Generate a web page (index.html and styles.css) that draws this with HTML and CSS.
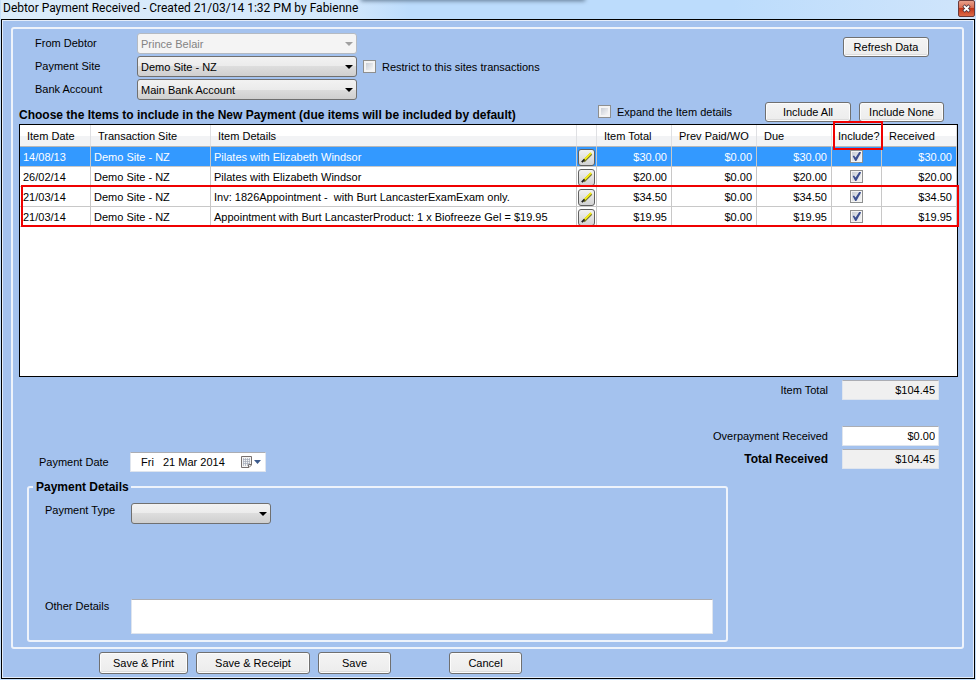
FILE: index.html
```html
<!DOCTYPE html>
<html lang="en">

<head>
  <meta charset="UTF-8">
  <title>Debtor Payment Received</title>
  <link rel="stylesheet" href="styles.css">
</head>

<body>
  <header class="titlebar">
    <h1>Debtor Payment Received - Created 21/03/14 1:32 PM by Fabienne</h1>
    <button class="close" type="button" aria-label="Close">
      <svg width="9" height="9" viewBox="0 0 9 9">
        <path d="M1.5 1.5L7.5 7.5M7.5 1.5L1.5 7.5" stroke="#4a3540" stroke-width="3.4" />
        <path d="M2 2L7 7M7 2L2 7" stroke="#fff" stroke-width="1.8" />
      </svg>
    </button>
  </header>

  <form class="window">
    <div class="panel">
      <div class="top">
        <div class="fields">
          <label for="debtor">From Debtor</label>
          <div class="select off"><select id="debtor" disabled><option>Prince Belair</option></select></div>
          <span></span>
          <label for="site">Payment Site</label>
          <div class="select"><select id="site"><option>Demo Site - NZ</option></select></div>
          <label class="check"><input type="checkbox"> Restrict to this sites transactions</label>
          <label for="bank">Bank Account</label>
          <div class="select"><select id="bank"><option>Main Bank Account</option></select></div>
        </div>
        <button class="btn refresh" type="button">Refresh Data</button>
      </div>

      <div class="bar">
        <h2>Choose the Items to include in the New Payment (due items will be included by default)</h2>
        <label class="check"><input type="checkbox"> Expand the Item details</label>
        <button class="btn all" type="button">Include All</button>
        <button class="btn none" type="button">Include None</button>
      </div>

      <div class="items">
        <table>
          <colgroup>
            <col class="c-date"><col class="c-site"><col><col class="c-edit"><col class="c-money"><col class="c-prev"><col class="c-money"><col class="c-inc"><col class="c-money">
          </colgroup>
          <thead>
            <tr>
              <th>Item Date</th>
              <th>Transaction Site</th>
              <th>Item Details</th>
              <th></th>
              <th>Item Total</th>
              <th>Prev Paid/WO</th>
              <th>Due</th>
              <th class="inc">Include?<span class="mark-head"></span></th>
              <th>Received</th>
            </tr>
          </thead>
          <tbody>
            <tr class="selected">
              <td>14/08/13</td>
              <td>Demo Site - NZ</td>
              <td>Pilates with Elizabeth Windsor</td>
              <td class="edit"><button type="button" aria-label="Edit"><svg width="16" height="16" viewBox="0 0 16 16"><use href="#pencil" /></svg></button></td>
              <td class="num">$30.00</td>
              <td class="num">$0.00</td>
              <td class="num">$30.00</td>
              <td class="tick"><input type="checkbox" aria-label="Include" checked></td>
              <td class="num">$30.00</td>
            </tr>
            <tr>
              <td>26/02/14</td>
              <td>Demo Site - NZ</td>
              <td>Pilates with Elizabeth Windsor</td>
              <td class="edit"><button type="button" aria-label="Edit"><svg width="16" height="16" viewBox="0 0 16 16"><use href="#pencil" /></svg></button></td>
              <td class="num">$20.00</td>
              <td class="num">$0.00</td>
              <td class="num">$20.00</td>
              <td class="tick"><input type="checkbox" aria-label="Include" checked></td>
              <td class="num">$20.00</td>
            </tr>
            <tr>
              <td>21/03/14</td>
              <td>Demo Site - NZ</td>
              <td>Inv: 1826Appointment -&nbsp; with Burt LancasterExamExam only.</td>
              <td class="edit"><button type="button" aria-label="Edit"><svg width="16" height="16" viewBox="0 0 16 16"><use href="#pencil" /></svg></button></td>
              <td class="num">$34.50</td>
              <td class="num">$0.00</td>
              <td class="num">$34.50</td>
              <td class="tick"><input type="checkbox" aria-label="Include" checked></td>
              <td class="num">$34.50</td>
            </tr>
            <tr>
              <td>21/03/14</td>
              <td>Demo Site - NZ</td>
              <td>Appointment with Burt LancasterProduct: 1 x Biofreeze Gel = $19.95</td>
              <td class="edit"><button type="button" aria-label="Edit"><svg width="16" height="16" viewBox="0 0 16 16"><use href="#pencil" /></svg></button></td>
              <td class="num">$19.95</td>
              <td class="num">$0.00</td>
              <td class="num">$19.95</td>
              <td class="tick"><input type="checkbox" aria-label="Include" checked></td>
              <td class="num">$19.95</td>
            </tr>
          </tbody>
        </table>
        <span class="mark-rows"></span>
      </div>

      <div class="totals">
        <label for="itemtotal">Item Total</label>
        <input id="itemtotal" type="text" value="$104.45" readonly>
        <label class="over" for="over">Overpayment Received</label>
        <input class="over" id="over" type="text" value="$0.00">
        <div class="date">
          <label for="date">Payment Date</label>
          <div class="datebox">
            <input id="date" type="text" value="Fri   21 Mar 2014">
            <button type="button" aria-label="Pick a date">
              <svg width="22" height="14" viewBox="0 0 22 14">
                <path d="M1.5 1.5H11.500V10L9 12.500H1.500Z" fill="#f4f4f4" stroke="#77706e" />
                <path d="M3 4.500H10M3 6.500H10M3 8.500H10M3.500 3V11M5.500 3V11M7.500 3V11M9.500 3V9" stroke="#a3abb8" stroke-width=".7" />
                <path d="M8.500 12.500V9.500H11.500" fill="none" stroke="#77706e" />
                <path d="M14 5H21L17.500 9Z" fill="#3c5a8c" />
              </svg>
            </button>
          </div>
        </div>
        <label class="total" for="total">Total Received</label>
        <input id="total" type="text" value="$104.45" readonly>
      </div>

      <fieldset class="details">
        <legend>Payment Details</legend>
        <div class="row type">
          <label for="type">Payment Type</label>
          <div class="select"><select id="type"><option></option></select></div>
        </div>
        <div class="row">
          <label for="other">Other Details</label>
          <textarea id="other"></textarea>
        </div>
      </fieldset>
    </div>

    <div class="actions">
      <button class="btn print" type="button">Save &amp; Print</button>
      <button class="btn receipt" type="button">Save &amp; Receipt</button>
      <button class="btn save" type="button">Save</button>
      <button class="btn cancel" type="button">Cancel</button>
    </div>
  </form>

  <svg class="defs" width="0" height="0">
    <symbol id="pencil" viewBox="0 0 16 16">
      <path d="M5 12L13 4" stroke="#77772a" stroke-width="3" />
      <path d="M5 11L13 3" stroke="#f6ee1c" stroke-width="2" />
      <path d="M3 13L6 10" stroke="#222" stroke-width="2" />
    </symbol>
  </svg>
</body>

</html>
```

FILE: styles.css
```css
* {
  box-sizing: border-box;
}

body {
  margin: 0;
  min-height: 100vh;
  padding: 0 1px 1px;
  display: flex;
  flex-direction: column;
  background-color: #c6e0fb;
  color: #000;
  font-family: "Liberation Sans", Arial, sans-serif;
  font-size: 11px;
  line-height: 14px;
}

input,
select,
textarea,
button {
  margin: 0;
  font: inherit;
  color: inherit;
}

/* title bar */
.titlebar {
  position: relative;
  overflow: hidden;
  display: flex;
  justify-content: space-between;
  height: 19px;
  background: linear-gradient(90deg, #dcecfa, #d4e8fb 35%, #bcdcfc 42%, #bcdcfc 75%, #d0e5fb);
}

/* blurred text of the window behind */
.titlebar::after {
  content: "";
  position: absolute;
  top: -4px;
  left: 37%;
  width: 23%;
  height: 5px;
  background-color: #607890;
  filter: blur(2px);
}

h1 {
  margin: 0;
  padding-left: 2px;
  font-family: Roboto, "Segoe UI", sans-serif;
  font-size: 12px;
  font-weight: 400;
  line-height: 16px;
}

.close {
  width: 17px;
  height: 17px;
  padding: 0;
  display: flex;
  align-items: center;
  justify-content: center;
  border: 1px solid #6b3a3a;
  border-radius: 2px;
  background: linear-gradient(#e8a08c, #d8674c 50%, #c2361a 50%, #dd6a48);
}

.window {
  flex: 1;
  display: flex;
  flex-direction: column;
  padding: 7px 10px 4px 9px;
  border: 1px solid #000;
  box-shadow: inset 0 0 0 1px #e4edfa;
  background-color: #a4c2ee;
}

.panel {
  flex: 1;
  display: flex;
  flex-direction: column;
  padding: 4px 4px 5px 6px;
  border: 2px solid #eef3fb;
  border-radius: 3px;
}

/* top fields */
.top {
  display: flex;
  justify-content: space-between;
  padding: 0 29px 0 16px;
}

.fields {
  display: grid;
  grid-template-columns: 102px 220px auto;
  row-gap: 2px;
}

.fields > label {
  line-height: 20px;
}

.fields > .check {
  margin-left: 6px;
}

.select {
  position: relative;
}

.select::after {
  content: "";
  position: absolute;
  top: 9px;
  right: 4px;
  border: 4px solid transparent;
  border-top-color: #000;
  border-bottom: 0;
  pointer-events: none;
}

.select.off::after {
  border-top-color: #a0a0a0;
}

.select select {
  appearance: none;
  display: block;
  width: 100%;
  height: 21px;
  padding: 0 3px;
  border: 1px solid #707070;
  border-radius: 3px;
  background: linear-gradient(#f2f2f2, #ebebeb 50%, #dddddd 50%, #cfcfcf);
}

.select select:disabled {
  border-color: #b4bac2;
  background: #f4f4f4;
  color: #838383;
  opacity: 1;
}

.check {
  display: flex;
  align-items: center;
  gap: 6px;
}

input[type="checkbox"] {
  appearance: none;
  flex: none;
  width: 13px;
  height: 13px;
  border: 1px solid #8e8f8f;
  background: linear-gradient(135deg, #c9ced6, #f6f6f6) content-box, #f4f4f4;
  padding: 2px;
}

input[type="checkbox"]:checked {
  padding: 1px;
}

input[type="checkbox"]:checked::before {
  content: "";
  display: block;
  width: 9px;
  height: 9px;
  background-color: #3c4f8f;
  clip-path: polygon(8% 48%, 22% 38%, 40% 62%, 80% 0, 98% 0, 98% 12%, 48% 100%, 36% 100%);
}

.btn {
  height: 20px;
  padding: 0;
  border: 1px solid #707070;
  border-radius: 3px;
  background: linear-gradient(#f4f4f4, #ececec);
  box-shadow: inset 0 0 0 1px #fcfcfc, inset 0 -2px #dcdcdc;
}

.refresh {
  width: 86px;
  margin-top: 4px;
}

.bar {
  display: flex;
  align-items: center;
  padding: 1px 14px 2px 0;
}

h2 {
  flex: 1;
  margin: 0;
  padding-top: 7px;
  font-size: 12px;
  line-height: 14px;
  white-space: nowrap;
}

.all {
  width: 86px;
  margin-left: 33px;
}

.none {
  width: 85px;
  margin-left: 8px;
}

/* items grid */
.items {
  position: relative;
  flex: 1;
  border: 1px solid #000;
  background-color: #fff;
}

table {
  width: 100%;
  table-layout: fixed;
  border-collapse: separate;
  border-spacing: 0;
}

.c-date { width: 71px; }
.c-site { width: 120px; }
.c-edit { width: 20px; }
.c-money { width: 75px; }
.c-prev { width: 85px; }
.c-inc { width: 50px; }

th {
  height: 22px;
  padding: 0 0 0 7px;
  border-right: 1px solid #dfe0e3;
  border-bottom: 1px solid #b8b8b8;
  background: linear-gradient(#fff 50%, #f2f3f5 50%);
  font-weight: 400;
  text-align: left;
  white-space: nowrap;
}

th.inc {
  position: relative;
  padding-left: 6px;
}

td {
  height: 20px;
  padding: 0 3px;
  border-right: 1px solid #c8c8c8;
  border-bottom: 1px solid #c8c8c8;
  white-space: nowrap;
}

.num {
  padding-right: 4px;
  text-align: right;
}

.tick input {
  display: block;
  margin: 0 auto;
}

.edit {
  padding: 0;
}

.edit button {
  display: block;
  width: 17px;
  height: 17px;
  margin: 1px auto 0;
  padding: 0;
  border: 1px solid #606060;
  border-radius: 3px;
  background: linear-gradient(#f2f2f2, #d2d2d2);
}

.edit svg {
  display: block;
  width: 15px;
  height: 15px;
}

.selected td {
  background-color: #3399ff;
  color: #fff;
}

/* red callouts */
.mark-head {
  position: absolute;
  top: -4px;
  left: 1px;
  width: 50px;
  height: 29px;
  border: 2px solid #f00000;
}

.mark-rows {
  position: absolute;
  top: 60px;
  left: 1px;
  right: -2px;
  height: 42px;
  border: 2px solid #f00000;
}

/* totals */
.totals {
  display: grid;
  grid-template-columns: 1fr auto 97px;
  column-gap: 14px;
  row-gap: 3px;
  align-items: start;
  padding: 3px 19px 0 20px;
  line-height: 20px;
}

.totals > label {
  grid-column: 2;
  text-align: right;
}

.totals > .total {
  font-size: 12px;
  font-weight: 700;
}

.totals > .over {
  margin-top: 23px;
}

.totals > input,
.datebox {
  width: 100%;
  height: 20px;
  padding: 0 3px;
  border: 1px solid #dfe5ee;
  border-top-color: #abadb3;
  border-radius: 1px;
  background-color: #fff;
}

.totals > input {
  text-align: right;
}

.totals > input:read-only {
  background-color: #f0f0f0;
}

.date {
  display: flex;
  align-items: center;
  padding-top: 3px;
}

.date label {
  width: 91px;
}

.datebox {
  width: 136px;
  display: flex;
  align-items: center;
  justify-content: space-between;
}

.datebox input {
  width: 100px;
  padding: 0 0 0 7px;
  border: 0;
  background: none;
}

.datebox button {
  padding: 0;
  border: 0;
  background: none;
}

.datebox svg {
  display: block;
}

/* payment details */
.details {
  min-height: 162px;
  margin: 8px 230px 0 8px;
  padding: 9px 13px 5px 16px;
  border: 2px solid #eef3fb;
  border-radius: 3px;
}

legend {
  margin-left: -12px;
  padding: 0 2px 0 3px;
  font-size: 12px;
  font-weight: 700;
}

.row {
  display: flex;
}

.row label {
  width: 86px;
}

.type {
  margin-bottom: 75px;
}

.type .select {
  width: 140px;
}

textarea {
  flex: 1;
  height: 35px;
  resize: none;
  border: 1px solid #dfe5ee;
  border-top-color: #abadb3;
  border-radius: 1px;
}

.actions {
  display: flex;
  gap: 8px;
  padding: 3px 0 0 88px;
}

.actions .btn {
  height: 22px;
}

.print { width: 89px; }
.receipt { width: 114px; }
.save { width: 73px; }

.cancel {
  width: 73px;
  margin-left: 50px;
}

.defs {
  position: absolute;
}
```
